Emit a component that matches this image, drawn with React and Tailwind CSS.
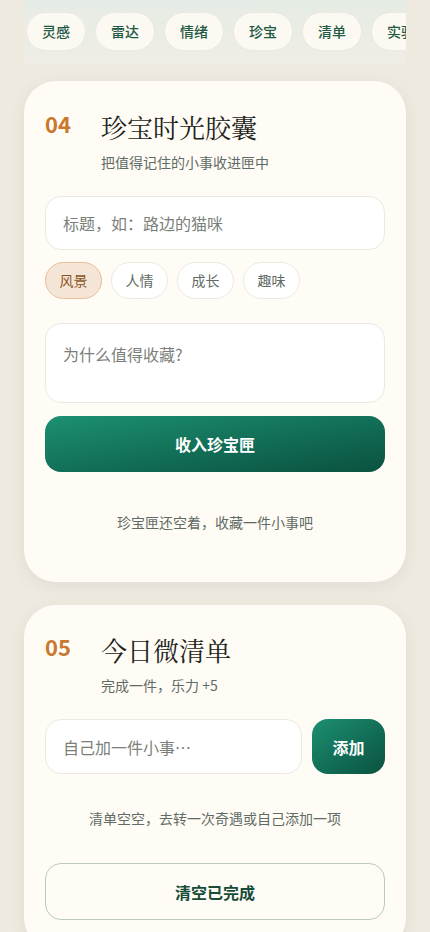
const sans = { fontFamily: '"Noto Sans CJK SC", "Noto Sans", sans-serif' }
const serif = { fontFamily: '"Noto Serif CJK SC", "Noto Sans CJK SC", serif' }

const navs = ['灵感', '雷达', '情绪', '珍宝', '清单', '实验']
const tags = ['风景', '人情', '成长', '趣味']

function SectionHead({ no, title, sub }) {
  return (
    <div className="flex items-start">
      <div className="w-[56px] shrink-0 pt-[2px] text-[22px] font-bold leading-none text-[#c9782f]">{no}</div>
      <div>
        <h2 className="text-[26px] font-normal leading-[34px] text-[#1d2420]" style={serif}>
          {title}
        </h2>
        <p className="mt-[8px] text-[14px] leading-[20px] text-[#5f6b66]">{sub}</p>
      </div>
    </div>
  )
}

export default function App() {
  return (
    <div className="min-h-[932px] bg-[#eeeae0] px-6 pb-4" style={sans}>
      <div className="h-[63px] overflow-hidden bg-gradient-to-b from-[#e5ece5] to-[#efede5] pl-[2px] pt-[12px]">
        <div className="flex gap-[9px]">
          {navs.map((n) => (
            <span
              key={n}
              className="flex h-[39px] w-[60px] shrink-0 items-center justify-center rounded-full border border-[#ebe8e0] bg-[#fcf9f2] text-[14px] font-medium text-[#1f5a44]"
            >
              {n}
            </span>
          ))}
        </div>
      </div>

      <section className="mt-[18px] rounded-[32px] bg-[#fffcf5] px-[21px] pb-[49px] pt-[29px] shadow-[0_4px_16px_rgba(90,80,60,0.08)]">
        <SectionHead no="04" title="珍宝时光胶囊" sub="把值得记住的小事收进匣中" />
        <div className="mt-[24px] flex h-[54px] items-center rounded-[16px] border border-[#ece9e2] bg-white px-[17px] text-[16px] text-[#7b7f7a]">
          标题，如：路边的猫咪
        </div>
        <div className="mt-[12px] flex gap-[9px]">
          {tags.map((t, i) => (
            <span
              key={t}
              className={
                i === 0
                  ? 'flex h-[37px] w-[57px] items-center justify-center rounded-full border border-[#e6c09b] bg-[#f5e5d6] text-[14px] text-[#8a5524]'
                  : 'flex h-[37px] w-[57px] items-center justify-center rounded-full border border-[#ece9e2] bg-white text-[14px] text-[#5f6b66]'
              }
            >
              {t}
            </span>
          ))}
        </div>
        <div className="mt-[24px] h-[80px] rounded-[16px] border border-[#ece9e2] bg-white px-[17px] pt-[18px] text-[16px] text-[#7b7f7a]">
          为什么值得收藏?
        </div>
        <button className="mt-[13px] flex h-[56px] w-full items-center justify-center rounded-[16px] bg-gradient-to-br from-[#1c9072] to-[#0a5240] text-[16px] font-bold text-white">
          收入珍宝匣
        </button>
        <p className="mt-[40px] text-center text-[14px] text-[#5f6b66]">珍宝匣还空着，收藏一件小事吧</p>
      </section>

      <section className="mt-[23px] rounded-[32px] bg-[#fffcf5] px-[21px] pb-[30px] pt-[28px] shadow-[0_4px_16px_rgba(90,80,60,0.08)]">
        <SectionHead no="05" title="今日微清单" sub="完成一件，乐力 +5" />
        <div className="mt-[24px] flex gap-[10px]">
          <div className="flex h-[55px] flex-1 items-center rounded-[16px] border border-[#ece9e2] bg-white px-[17px] text-[16px] text-[#7b7f7a]">
            自己加一件小事…
          </div>
          <button className="flex h-[55px] w-[73px] items-center justify-center rounded-[16px] bg-gradient-to-br from-[#1c9072] to-[#0a5240] text-[16px] font-bold text-white">
            添加
          </button>
        </div>
        <p className="mt-[34px] text-center text-[14px] text-[#5f6b66]">清单空空，去转一次奇遇或自己添加一项</p>
        <button className="mt-[34px] flex h-[57px] w-full items-center justify-center rounded-[16px] border border-[#b9cac1] bg-[#fffcf5] text-[16px] font-bold text-[#174c3a]">
          清空已完成
        </button>
      </section>
    </div>
  )
}
